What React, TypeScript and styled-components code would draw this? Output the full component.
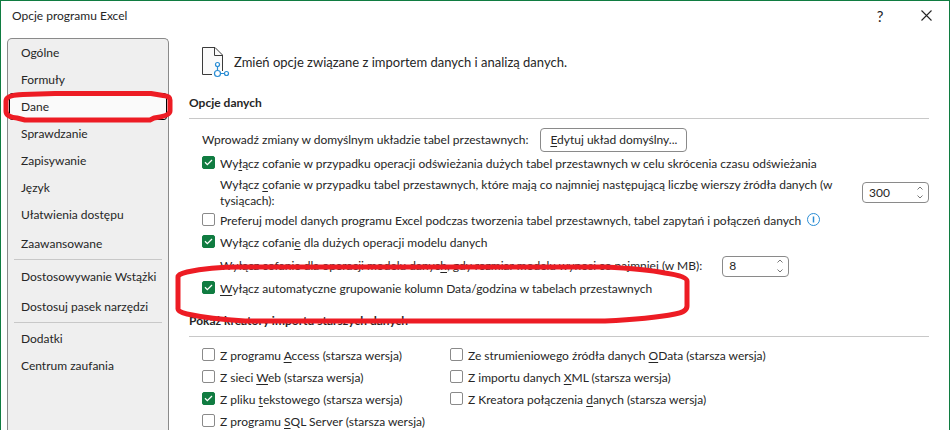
import React from "react";
import styled, { createGlobalStyle, css } from "styled-components";

const Global = createGlobalStyle`
  *, *::before, *::after { box-sizing: border-box; }
  html, body { margin: 0; height: 100%; overflow: hidden; }
  #root { height: 100%; }
  body, button, input {
    font-family: Lato, "Noto Sans", sans-serif;
    font-size: 12px;
    line-height: 16px;
    color: #262626;
  }
  u { text-underline-offset: 2px; }
`;

const Dialog = styled.div`
  display: flex;
  flex-direction: column;
  height: 100%;
  overflow: hidden;
  background: #fff;
  border: 1px solid #107c41;
  border-bottom: 0;
`;

const TitleBar = styled.header`
  display: flex;
  align-items: center;
  flex: none;
  height: 37px;
  padding: 0 12px 8px 11px;
`;

const Title = styled.h1`
  flex: 1;
  margin: 0;
  font-size: 12px;
  font-weight: 400;
`;

const TitleButton = styled.button`
  display: flex;
  align-items: center;
  justify-content: center;
  width: 22px;
  height: 22px;
  margin-left: 24px;
  padding: 0;
  border: 0;
  background: none;
  font-size: 15px;
`;

const Body = styled.div`
  display: flex;
  flex: 1;
  min-height: 0;
  padding: 0 20px 0 6px;
`;

const Sidebar = styled.nav`
  flex: none;
  display: flex;
  flex-direction: column;
  width: 162px;
  padding: 0 1px;
  background: #efefef;
  border: 1px solid #8a8a8a;
  border-bottom: 0;
  border-radius: 5px 5px 0 0;
`;

const NavItem = styled.button<{ $tall?: boolean }>`
  position: relative;
  display: flex;
  align-items: center;
  flex: none;
  height: ${(p) => (p.$tall ? 30 : 27)}px;
  padding: 0 11px;
  border: 1px solid transparent;
  border-radius: 3px;
  background: none;
  text-align: left;
  white-space: nowrap;
  &[aria-current="page"] {
    background: #fafafa;
    border-color: #000;
  }
`;

const NavDivider = styled.hr`
  flex: none;
  width: 148px;
  height: 1px;
  margin: 0 auto 2px;
  border: 0;
  background: #c8c8c8;
`;

const NavGroup = styled.div<{ $spaced?: boolean }>`
  display: flex;
  flex-direction: column;
  padding-top: ${(p) => (p.$spaced ? 1 : 0)}px;
`;

const Main = styled.main`
  flex: 1;
  min-width: 0;
  padding: 4px 0 0 20px;
`;

const Intro = styled.div`
  display: flex;
  align-items: center;
  gap: 4px;
  padding: 0 0 0 13px;
  height: 40px;
  font-size: 13px;
`;

const SectionTitle = styled.h2`
  margin: 13px 0 0;
  padding-bottom: 7px;
  border-bottom: 1px solid #c8c8c8;
  font-size: 12px;
  line-height: 16px;
  font-weight: 700;
`;

const Rows = styled.div`
  padding: 8px 0 0 13px;
`;

const Row = styled.div<{ $h?: number; $indent?: boolean }>`
  position: relative;
  display: flex;
  align-items: center;
  min-height: ${(p) => p.$h ?? 22}px;
  ${(p) => p.$indent && css`padding-left: 18px;`}
`;

const CheckLabel = styled.label`
  display: flex;
  align-items: center;
  gap: 5px;
  height: 22px;
  white-space: nowrap;
`;

const CheckWrap = styled.span`
  display: grid;
  flex: none;
  margin-bottom: 3px;
  > * { grid-area: 1 / 1; }
  svg { pointer-events: none; visibility: hidden; }
  input:checked + svg { visibility: visible; }
`;

const CheckBox = styled.input`
  appearance: none;
  width: 13px;
  height: 13px;
  margin: 0;
  border: 1px solid #8a8a8a;
  border-radius: 2px;
  background: #fff;
  &:checked { background: #107c41; border-color: #107c41; }
`;

const PushButton = styled.button`
  height: 24px;
  margin-left: 12px;
  padding: 0 9px;
  border: 1px solid #8a8a8a;
  border-radius: 4px;
  background: #fff;
  white-space: nowrap;
`;

const SpinBox = styled.div`
  display: flex;
  flex: none;
  width: 67px;
  height: 21px;
  border: 1px solid #8a8a8a;
  border-radius: 4px;
  background: #fff;
`;

const SpinInput = styled.input`
  flex: 1;
  min-width: 0;
  padding: 0 0 0 6px;
  border: 0;
  outline: 0;
  background: none;
  appearance: textfield;
  &::-webkit-inner-spin-button { appearance: none; }
`;

const SpinButtons = styled.div`
  display: flex;
  flex-direction: column;
  width: 16px;
`;

const SpinButton = styled.button`
  display: flex;
  flex: 1;
  align-items: center;
  justify-content: center;
  min-height: 0;
  padding: 0;
  border: 0;
  background: none;
`;

const SpinLabel = styled.label<{ $wide?: boolean }>`
  margin-right: 20px;
  ${(p) => p.$wide && css`flex: 1;`}
`;

const InfoButton = styled.button`
  display: flex;
  margin: 0 0 4px 6px;
  padding: 0;
  border: 0;
  background: none;
`;

const Columns = styled.div`
  display: grid;
  grid-template-columns: 248px 1fr;
`;

const Mark = styled.svg`
  position: absolute;
  z-index: 1;
  pointer-events: none;
  overflow: visible;
  fill: none;
  stroke: #ed1c24;
  stroke-width: 5;
  stroke-linejoin: round;
`;

const NavMark = styled(Mark)`
  left: -7px;
  top: -4px;
`;

const RowMark = styled(Mark)`
  left: -27px;
  top: -14px;
`;

function Check({ children, on = false }: { children: React.ReactNode; on?: boolean }) {
  return (
    <CheckLabel>
      <CheckWrap>
        <CheckBox type="checkbox" defaultChecked={on} />
        <svg width="13" height="13" viewBox="0 0 13 13" fill="none" stroke="#fff" strokeWidth="1.3">
          <path d="M3 6.3 5.3 8.6 10 4" />
        </svg>
      </CheckWrap>
      <span>{children}</span>
    </CheckLabel>
  );
}

function Spin({ id, value }: { id: string; value: number }) {
  const [n, setN] = React.useState(value);
  return (
    <SpinBox>
      <SpinInput id={id} type="number" value={n} onChange={(e) => setN(Number(e.target.value))} />
      <SpinButtons>
        <SpinButton aria-label="Zwiększ" onClick={() => setN(n + 1)}>
          <svg width="6" height="4" viewBox="0 0 6 4" fill="none" stroke="#777">
            <path d="M.5 3.5 3 1 5.5 3.5" />
          </svg>
        </SpinButton>
        <SpinButton aria-label="Zmniejsz" onClick={() => setN(n - 1)}>
          <svg width="6" height="4" viewBox="0 0 6 4" fill="none" stroke="#777">
            <path d="M.5 .5 3 3 5.5 .5" />
          </svg>
        </SpinButton>
      </SpinButtons>
    </SpinBox>
  );
}

export default function App() {
  return (
    <>
      <Global />
      <Dialog>
        <TitleBar>
          <Title>Opcje programu Excel</Title>
          <TitleButton>?</TitleButton>
          <TitleButton aria-label="Zamknij">
            <svg width="11" height="11" viewBox="0 0 11 11" stroke="#262626" strokeWidth="1.1">
              <path d="M.5 .5 10.5 10.5M10.5 .5 .5 10.5" />
            </svg>
          </TitleButton>
        </TitleBar>
        <Body>
          <Sidebar>
            <NavGroup>
              <NavItem>Ogólne</NavItem>
              <NavItem>Formuły</NavItem>
              <NavItem aria-current="page">
                Dane
                <NavMark width="170" height="33" viewBox="0 0 170 33">
                  <path d="M20 4.500 52 3.500H148L160 5.500Q167 6 167 10V21Q167 26 151 28L147 30H22L14 28Q3 27 3 21V11Q3 5 20 4.500Z" />
                </NavMark>
              </NavItem>
              <NavItem>Sprawdzanie</NavItem>
              <NavItem>Zapisywanie</NavItem>
              <NavItem>Język</NavItem>
              <NavItem>Ułatwienia dostępu</NavItem>
            </NavGroup>
            <NavGroup $spaced>
              <NavItem $tall>Zaawansowane</NavItem>
            </NavGroup>
            <NavDivider />
            <NavGroup>
              <NavItem $tall>Dostosowywanie Wstążki</NavItem>
              <NavItem $tall>Dostosuj pasek narzędzi</NavItem>
            </NavGroup>
            <NavDivider />
            <NavGroup>
              <NavItem>Dodatki</NavItem>
              <NavItem>Centrum zaufania</NavItem>
            </NavGroup>
          </Sidebar>
          <Main>
            <Intro>
              <svg width="28" height="32" viewBox="0 0 28 32" fill="none">
                <path d="M11 28.500H.5V1.500H13L20.500 9V20.500L18 24V26Z" fill="#fafafa" />
                <path d="M10 28.500H.5V1.500H13L20.500 9V25M12.500 1.500V9.500H20.500" stroke="#3b3b3b" />
                <g stroke="#2a8dd4" fill="#fff" strokeWidth="1.200">
                  <path d="M15.500 20.500V24.500M18.500 27.500H23" />
                  <circle cx="15.500" cy="18.500" r="2" />
                  <circle cx="15.500" cy="27.500" r="3" />
                  <circle cx="24.500" cy="27.500" r="2" />
                </g>
              </svg>
              <span>Zmień opcje związane z importem danych i analizą danych.</span>
            </Intro>
            <SectionTitle>Opcje danych</SectionTitle>
            <Rows>
              <Row $h={26}>
                <span>Wprowadź zmiany w domyślnym układzie tabel przestawnych:</span>
                <PushButton><u>E</u>dytuj układ domyślny...</PushButton>
              </Row>
              <Row>
                <Check on>Wy<u>ł</u>ącz cofanie w przypadku operacji odświeżania dużych tabel przestawnych w celu skrócenia czasu odświeżania</Check>
              </Row>
              <Row $h={35} $indent>
                <SpinLabel $wide htmlFor="rows">
                  Wyłącz <u>c</u>ofanie w przypadku tabel przestawnych, które mają co najmniej następującą liczbę wierszy źródła danych (w tysiącach):
                </SpinLabel>
                <Spin id="rows" value={300} />
              </Row>
              <Row>
                <Check>Preferuj model danych programu Excel podczas tworzenia tabel przestawnych, tabel zapytań i połączeń danych</Check>
                <InfoButton aria-label="Informacje">
                  <svg width="13" height="13" viewBox="0 0 13 13" fill="none" stroke="#2a8dd4">
                    <circle cx="6.500" cy="6.500" r="6" />
                    <path d="M6.500 3.500V9.500" strokeWidth="1.500" />
                  </svg>
                </InfoButton>
              </Row>
              <Row>
                <Check on>Wyłącz cofani<u>e</u> dla dużych operacji modelu danych</Check>
              </Row>
              <Row $h={24} $indent>
                <SpinLabel htmlFor="size">
                  Wyłącz cofanie dla operacji modelu danyc<u>h</u>, gdy rozmiar modelu wynosi co najmniej (w MB):
                </SpinLabel>
                <Spin id="size" value={8} />
              </Row>
              <Row>
                <Check on><u>W</u>yłącz automatyczne grupowanie kolumn Data/godzina w tabelach przestawnych</Check>
                <RowMark width="516" height="60" viewBox="0 0 516 60">
                  <path d="M3 13Q3 10 12 8Q35 3 65 3H430Q470 5 490 9Q512 12 512 17V42Q512 48 500 50Q475 55 430 57H70Q35 55 12 50Q3 48 3 45Z" />
                </RowMark>
              </Row>
            </Rows>
            <SectionTitle>Pokaż kreatory importu starszych danych</SectionTitle>
            <Rows>
              <Columns>
                <div>
                  <Check>Z programu <u>A</u>ccess (starsza wersja)</Check>
                  <Check>Z sieci <u>W</u>eb (starsza wersja)</Check>
                  <Check on>Z pliku <u>t</u>ekstowego (starsza wersja)</Check>
                  <Check>Z programu <u>S</u>QL Server (starsza wersja)</Check>
                </div>
                <div>
                  <Check>Ze strumieniowego źródła danych <u>O</u>Data (starsza wersja)</Check>
                  <Check>Z importu danych <u>X</u>ML (starsza wersja)</Check>
                  <Check>Z Kreatora połączenia <u>d</u>anych (starsza wersja)</Check>
                </div>
              </Columns>
            </Rows>
          </Main>
        </Body>
      </Dialog>
    </>
  );
}
